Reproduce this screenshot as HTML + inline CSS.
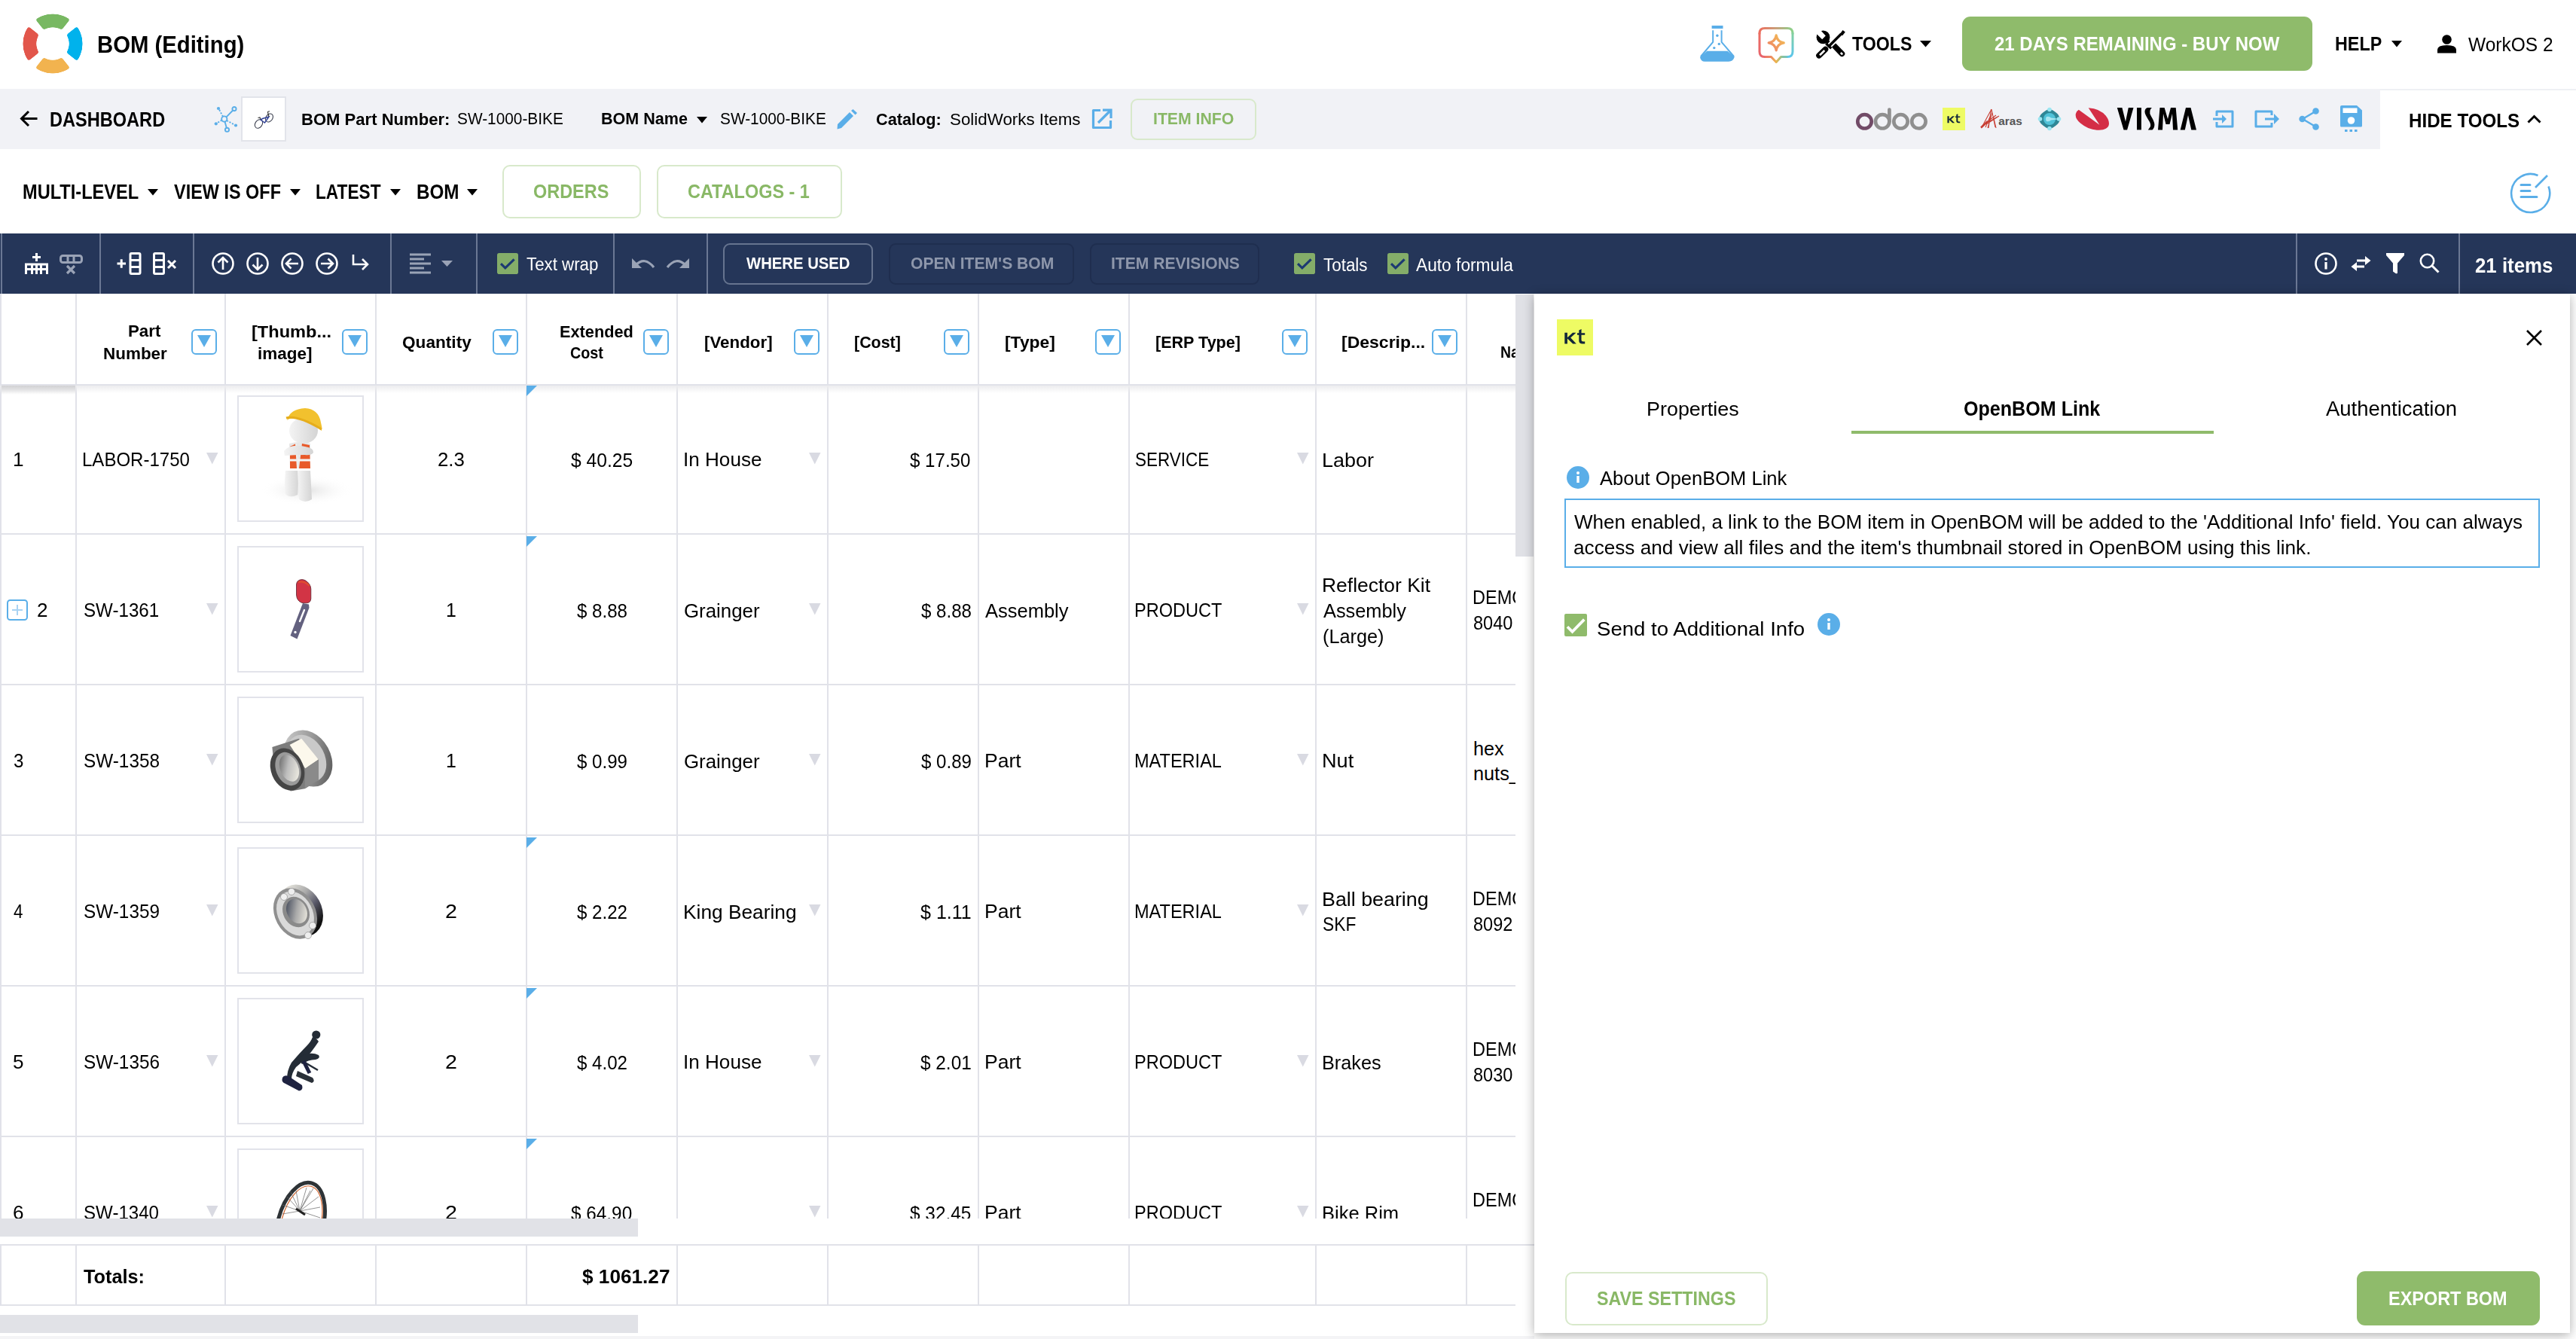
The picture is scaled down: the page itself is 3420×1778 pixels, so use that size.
<!DOCTYPE html>
<html><head><meta charset="utf-8"><title>BOM (Editing)</title>
<style>
html,body{margin:0;padding:0;}
body{width:3420px;height:1778px;position:relative;overflow:hidden;background:#fff;font-family:"Liberation Sans",sans-serif;}
.t{position:absolute;white-space:nowrap;transform-origin:0 0;}
svg{overflow:visible}
</style></head><body>
<svg style="position:absolute;left:30px;top:18px;" width="80" height="80" viewBox="0 0 80 80"><defs><filter id="rnd" x="-10%" y="-10%" width="120%" height="120%"><feGaussianBlur stdDeviation="1.6"/><feComponentTransfer><feFuncA type="linear" slope="6" intercept="-2.5"/></feComponentTransfer></filter><mask id="lm"><rect width="80" height="80" fill="#fff"/><path d="M50.32 55.13 L66.59 75.64 L75.64 66.59 L55.13 50.32Z" fill="#000" stroke="#000" stroke-width="1.5" stroke-linejoin="round"/><path d="M24.87 50.32 L4.36 66.59 L13.41 75.64 L29.68 55.13Z" fill="#000" stroke="#000" stroke-width="1.5" stroke-linejoin="round"/><path d="M29.68 24.87 L13.41 4.36 L4.36 13.41 L24.87 29.68Z" fill="#000" stroke="#000" stroke-width="1.5" stroke-linejoin="round"/><path d="M55.13 29.68 L75.64 13.41 L66.59 4.36 L50.32 24.87Z" fill="#000" stroke="#000" stroke-width="1.5" stroke-linejoin="round"/><circle cx="40" cy="40" r="21.8" fill="#000"/></mask></defs><g filter="url(#rnd)"><g mask="url(#lm)"><clipPath id="lc"><circle cx="40" cy="40" r="39.6"/></clipPath><g clip-path="url(#lc)"><path d="M40 40 L-2.43 -2.43 L82.43 -2.43Z" fill="#78b862"/><path d="M40 40 L82.43 -2.43 L82.43 82.43Z" fill="#00b2ec"/><path d="M40 40 L82.43 82.43 L-2.43 82.43Z" fill="#f2b34f"/><path d="M40 40 L-2.43 82.43 L-2.43 -2.43Z" fill="#e2574b"/></g></g></g></svg>
<svg style="position:absolute;left:2250px;top:28px;" width="140" height="62" viewBox="0 0 140 62"><rect x="22.6" y="6" width="14.9" height="4" fill="#5aaee8"/>
<path d="M24.2 12.2 V27.8 L8 47 M35.6 12.2 V27.8 L52 47" stroke="#5aaee8" stroke-width="2" fill="none" stroke-linejoin="round"/>
<path d="M16.3 39.7 H43.5 L52.8 47.6 Q51 53.8 45 53.8 H13.6 Q7.8 53.8 7 47.8Z" fill="#5aaee8"/>
<circle cx="29.9" cy="19.3" r="1.7" fill="#5aaee8"/><circle cx="32.3" cy="30.4" r="1.7" fill="#5aaee8"/><circle cx="25.8" cy="35.6" r="1.7" fill="#5aaee8"/>
<defs>
<linearGradient id="gT" gradientUnits="userSpaceOnUse" x1="86" y1="0" x2="130" y2="0"><stop offset="0" stop-color="#ec6e5e"/><stop offset="0.5" stop-color="#c9a07a"/><stop offset="1" stop-color="#8cd28c"/></linearGradient>
<linearGradient id="gR" gradientUnits="userSpaceOnUse" x1="0" y1="9" x2="0" y2="48"><stop offset="0" stop-color="#8cd28c"/><stop offset="1" stop-color="#5bc6ee"/></linearGradient>
<linearGradient id="gL" gradientUnits="userSpaceOnUse" x1="0" y1="9" x2="0" y2="48"><stop offset="0" stop-color="#ec6e5e"/><stop offset="1" stop-color="#e8656e"/></linearGradient>
<linearGradient id="gB" gradientUnits="userSpaceOnUse" x1="86" y1="0" x2="130" y2="0"><stop offset="0" stop-color="#e8656e"/><stop offset="0.35" stop-color="#ee8a62"/><stop offset="0.5" stop-color="#eeb54c"/><stop offset="0.7" stop-color="#86c2a0"/><stop offset="1" stop-color="#5bc6ee"/></linearGradient>
<linearGradient id="gS" gradientUnits="userSpaceOnUse" x1="98" y1="38" x2="118" y2="19"><stop offset="0" stop-color="#ee8068"/><stop offset="1" stop-color="#f3c052"/></linearGradient>
</defs>
<g fill="none" stroke-width="3" stroke-linejoin="round" stroke-linecap="round">
<path d="M86 16.5 Q86 9.6 93 9.6 H123 Q130 9.6 130 16.5" stroke="url(#gT)"/>
<path d="M130 16 V40.5 Q130 47.5 123 47.5 H121" stroke="url(#gR)"/>
<path d="M86 16 V40.5 Q86 47.5 93 47.5 H95" stroke="url(#gL)"/>
<path d="M94 47.5 H101.5 L108.2 54.5 L114.5 47.5 H122" stroke="url(#gB)"/>
<path d="M108.2 19 Q109.6 27.4 118.2 28.9 Q109.6 30.4 108.2 38.8 Q106.8 30.4 98.2 28.9 Q106.8 27.4 108.2 19Z" stroke="url(#gS)" stroke-width="3.3"/>
</g></svg>
<svg style="position:absolute;left:2405px;top:35px;" width="50" height="45" viewBox="0 0 50 45"><circle cx="15.5" cy="14.4" r="8.9" fill="#000"/><path d="M1.5 5 L14.2 17.2 L18.8 12.6 L7 -0.5 Z" fill="#fff"/><path d="M18 17 L24 23" stroke="#000" stroke-width="5"/><path d="M30.5 26 L40.5 36.3" stroke="#000" stroke-width="7.5" stroke-linecap="round"/><path d="M38.8 35 L41.2 37.4" stroke="#fff" stroke-width="2.6"/><path d="M39.5 10 L22 27.5" stroke="#fff" stroke-width="7"/><path d="M39.5 10 L22 27.5" stroke="#000" stroke-width="3.4"/><path d="M41.5 5 L44.8 7.5 L41.2 12.2 L37.5 10.5Z" fill="#000"/><path d="M19.2 22.8 L26.3 29.3" stroke="#000" stroke-width="3.2"/><path d="M18.5 30.5 L10 38.8" stroke="#000" stroke-width="7.6" stroke-linecap="round"/><path d="M17.3 32 L11 38.2" stroke="#fff" stroke-width="2.6"/></svg>
<svg style="position:absolute;left:2549px;top:54px;" width="16" height="9" viewBox="0 0 16 9"><path d="M0 0 H15 L7.5 8.6Z" fill="#000"/></svg>
<div style="position:absolute;left:2605px;top:22px;width:465px;height:72px;background:#8fbb6b;border-radius:11px;"></div>
<svg style="position:absolute;left:3175px;top:54px;" width="15" height="9" viewBox="0 0 15 9"><path d="M0 0 H14 L7 8.6Z" fill="#000"/></svg>
<svg style="position:absolute;left:3236px;top:46px;" width="25" height="25" viewBox="0 0 25 25"><circle cx="12.5" cy="6.5" r="6.3" fill="#000"/><path d="M0 24.5 V20 Q0 14 12.5 14 Q25 14 25 20 V24.5Z" fill="#000"/></svg>
<div style="position:absolute;left:0px;top:118px;width:3160px;height:80px;background:#f1f2f6;"></div>
<div style="position:absolute;left:3160px;top:118px;width:260px;height:2px;background:#eef0f4;"></div>
<svg style="position:absolute;left:26px;top:145px;" width="25" height="25" viewBox="0 0 25 25"><path d="M23.5 12.5 H3 M12 3 L2.5 12.5 L12 22" stroke="#000" stroke-width="3" fill="none"/></svg>
<svg style="position:absolute;left:284px;top:141px;" width="32" height="35" viewBox="0 0 32 35"><g stroke="#5aaee8" stroke-width="1.9" fill="none">
<circle cx="13.8" cy="17" r="3.6"/><circle cx="27" cy="3.6" r="2.6"/><circle cx="17.5" cy="31.3" r="2.6"/>
<path d="M16.5 14.3 L25.2 5.5 M14.5 20.6 L16.8 28.7" /><path d="M12 13.8 L7 4.5 M17 19 L27.5 24.8 M10.5 18.5 L4 22.5" stroke-dasharray="2.2 1.8"/></g>
<circle cx="6" cy="3" r="2.1" fill="#5aaee8"/><circle cx="2.8" cy="23.3" r="2.1" fill="#5aaee8"/><circle cx="29" cy="25.5" r="2.1" fill="#5aaee8"/></svg>
<div style="position:absolute;left:320px;top:128px;width:60px;height:60px;background:#fff;border:2px solid #e2e4ea;box-sizing:border-box;"></div>
<svg style="position:absolute;left:320px;top:128px;" width="60" height="60" viewBox="0 0 60 60"><g fill="none" stroke-width="1.1"><ellipse cx="23.5" cy="36.5" rx="4.6" ry="6.2" transform="rotate(35 23.5 36.5)" stroke="#3b3f4f"/><ellipse cx="37.5" cy="28.5" rx="4.4" ry="6" transform="rotate(35 37.5 28.5)" stroke="#3b3f4f"/>
<path d="M26 31 L31.5 35 L37 27 L28.5 29.5 Z" stroke="#33449a" stroke-width="1.5"/><path d="M35.5 21 L37 27 M35 20.5 L38 19.8 M26 30.5 L25 28 L22.5 28.5" stroke="#333"/></g></svg>
<svg style="position:absolute;left:925px;top:155px;" width="15" height="9" viewBox="0 0 15 9"><path d="M0 0 H14 L7 8.6Z" fill="#000"/></svg>
<svg style="position:absolute;left:1110px;top:145px;" width="28" height="27" viewBox="0 0 28 27"><path d="M2 20 L18 4 L23 9 L7 25 L1.5 26.5Z" fill="#5aaee8"/><path d="M20 2 L22.5 0 L28 5 L25.5 7.5Z" fill="#5aaee8"/></svg>
<svg style="position:absolute;left:1449px;top:144px;" width="28" height="28" viewBox="0 0 28 28"><path d="M12 2.5 H2.5 V25.5 H25.5 V16" stroke="#5aaee8" stroke-width="3.2" fill="none" stroke-linejoin="round"/><path d="M9 19 L25 3 M15 2.2 H26 V13" stroke="#5aaee8" stroke-width="3.2" fill="none"/></svg>
<div style="position:absolute;left:1501px;top:130.5px;width:167px;height:55px;border:2px solid #d8e9cb;border-radius:9px;box-sizing:border-box;"></div>
<svg style="position:absolute;left:2450px;top:135px;" width="170" height="45" viewBox="0 0 170 45"><circle cx="25.5" cy="26.3" r="9.2" stroke="#714b67" stroke-width="4.7" fill="none"/><g stroke="#8f8f8f" stroke-width="4.7" fill="none"><circle cx="49.2" cy="26.3" r="9.2"/><path d="M58.4 26.3 V10.5" stroke-linecap="round"/><circle cx="73.5" cy="26.3" r="9.2"/><circle cx="97.4" cy="26.3" r="9.2"/></g></svg>
<div style="position:absolute;left:2579px;top:143px;width:30px;height:30px;background:#eefb64;"></div>
<svg style="position:absolute;left:2579px;top:143px;" width="30" height="30" viewBox="0 0 30 30"><path transform="scale(0.625)" d="M10.3 17.8 H13.9 V24.2 L21 17.8 H25.5 L18.2 24.6 L25.8 32.4 H21.2 L13.9 25.5 V32.4 H10.3 Z M29.3 14.5 L32.6 13.1 L32.5 18.3 H37.2 V20.8 H32.5 V27.5 Q32.5 29.6 35 29.6 H37.2 V32.4 H34 Q29.3 32.4 29.3 28.5 V20.8 H27 V18.3 H29.3 Z" fill="#12263a"/></svg>
<svg style="position:absolute;left:2620px;top:135px;" width="80" height="45" viewBox="0 0 80 45"><g stroke="#c42b1f" stroke-width="1.1" fill="none" opacity="0.9"><path d="M10.5 35 L24 10 M24 10 L29 34 M23.5 10 L20 35 M25 14 L19 35 M17 30 L34 19 M20 27 L32 20 M22 24 L30 18 M16 34 L22 20 M26.5 20 L30 35 M11 34 L21 25"/><path d="M10 34.5 L19 26" stroke-width="2.5"/></g><text x="33.3" y="31" font-family="Liberation Sans" font-weight="bold" font-size="15.5" fill="#555" textLength="31.5" lengthAdjust="spacingAndGlyphs">aras</text></svg>
<svg style="position:absolute;left:2705px;top:142px;" width="32" height="32" viewBox="0 0 32 32"><path d="M16 2.5 Q21 4 27 9.5 Q30 14 29.5 16 Q30 19 27 22.5 Q21 28 16 29.5 Q11 28 5 22.5 Q2 19 2.5 16 Q2 13 5 9.5 Q11 4 16 2.5Z" fill="#2f8796"/><circle cx="16" cy="16" r="8" fill="#50c2d8"/><path d="M12 13 Q16 12 18 14.5 L29 16 L18 17.5 Q16 20 12 19 Q10 16 12 13Z" fill="#a9e6f0"/><circle cx="16" cy="3.5" r="2.8" fill="#9be6f2"/><circle cx="16" cy="28.5" r="2.8" fill="#9be6f2"/><circle cx="3.5" cy="16" r="2.8" fill="#9be6f2"/><circle cx="28.5" cy="16" r="2.8" fill="#9be6f2"/></svg>
<svg style="position:absolute;left:2750px;top:135px;" width="170" height="45" viewBox="0 0 170 45"><path d="M9.8 10.8 L37.4 30.7 L22.7 8.2 Q38 9 46 19 Q52 27 49 33 Q45 38.5 34 37.7 Q22 37 12 28.5 Q4.5 22 5.9 16 Q6.8 12.5 9.8 10.8Z" fill="#d42e46"/><g fill="#000"><path d="M60.8 8 L67.4 8 L72 26.6 L75.8 8 L82.5 8 L74.1 37.4 L69.5 37.4Z"/><path d="M87 8 H92.9 V37.4 H87Z"/><path d="M106.9 8 L101 8 Q96.5 9.5 97.8 15.5 Q99 19 104 27 Q106.5 32 104 34.5 L101.8 37.4 L107.5 37.4 Q110.6 35 110.4 30 Q110 26 106 19.5 Q103.5 15.5 104.4 12 Q105 9.5 106.9 8Z"/><path d="M115 37.4 L117.5 8 L123.6 8 L128 23 L132 8 L138.7 8 L141.2 37.4 L135 37.4 L134 16 L130.5 30 L125.5 30 L122 16 L121 37.4Z"/><path d="M144.7 37.4 L152 8 L158.5 8 L166 37.4 L159.3 37.4 L155 18 L150.8 37.4Z"/></g></svg>
<svg style="position:absolute;left:2938px;top:146px;" width="28" height="24" viewBox="0 0 28 24"><path d="M5 8 V2 H26 V22 H5 V16" stroke="#5aaee8" stroke-width="3" fill="none" stroke-linejoin="round"/><path d="M0 12 H15" stroke="#5aaee8" stroke-width="3"/><path d="M12 6 L18 12 L12 18Z" fill="#5aaee8"/></svg>
<svg style="position:absolute;left:2993px;top:146px;" width="34" height="24" viewBox="0 0 34 24"><path d="M23 7 V2 H2 V22 H23 V17" stroke="#5aaee8" stroke-width="3" fill="none" stroke-linejoin="round"/><path d="M14 12 H28" stroke="#5aaee8" stroke-width="3"/><path d="M26 5 L33 12 L26 19Z" fill="#5aaee8"/></svg>
<svg style="position:absolute;left:3052px;top:143px;" width="28" height="30" viewBox="0 0 28 30"><g stroke="#5aaee8" stroke-width="2.6"><path d="M5 15 L22 5 M5 15 L22 25"/></g><circle cx="22.5" cy="4.5" r="4.3" fill="#5aaee8"/><circle cx="4.6" cy="15" r="4.3" fill="#5aaee8"/><circle cx="22.5" cy="25.5" r="4.3" fill="#5aaee8"/></svg>
<svg style="position:absolute;left:3107px;top:140px;" width="30" height="37" viewBox="0 0 30 37"><path d="M2 0 H22 L29 6.5 V27 Q29 28.5 27.5 28.5 H1.5 Q0 28.5 0 27 V1.5 Q0 0 2 0Z" fill="#5aaee8"/>
<rect x="3.5" y="3.5" width="19" height="6.5" fill="#fff"/><circle cx="14.5" cy="20" r="4.8" fill="#fff"/>
<rect x="6" y="32" width="3.5" height="3" fill="#5aaee8"/><rect x="12.5" y="32" width="3.5" height="3" fill="#5aaee8"/><rect x="19" y="32" width="3.5" height="3" fill="#5aaee8"/></svg>
<svg style="position:absolute;left:3355px;top:153px;" width="19" height="11" viewBox="0 0 19 11"><path d="M1.5 9.5 L9.5 1.5 L17.5 9.5" stroke="#000" stroke-width="3" fill="none"/></svg>
<svg style="position:absolute;left:196px;top:251px;" width="15" height="9" viewBox="0 0 15 9"><path d="M0 0 H14 L7 8.6Z" fill="#000"/></svg>
<svg style="position:absolute;left:384.6px;top:251px;" width="15" height="9" viewBox="0 0 15 9"><path d="M0 0 H14 L7 8.6Z" fill="#000"/></svg>
<svg style="position:absolute;left:518px;top:251px;" width="15" height="9" viewBox="0 0 15 9"><path d="M0 0 H14 L7 8.6Z" fill="#000"/></svg>
<svg style="position:absolute;left:620px;top:251px;" width="15" height="9" viewBox="0 0 15 9"><path d="M0 0 H14 L7 8.6Z" fill="#000"/></svg>
<div style="position:absolute;left:666.5px;top:218.5px;width:184px;height:71px;border:2px solid #d8e9cb;border-radius:10px;box-sizing:border-box;"></div>
<div style="position:absolute;left:871.5px;top:218.5px;width:246px;height:71px;border:2px solid #d8e9cb;border-radius:10px;box-sizing:border-box;"></div>
<svg style="position:absolute;left:3331px;top:227px;" width="54" height="54" viewBox="0 0 54 54"><path d="M38.5 6 A25.5 25.5 0 1 0 52.5 20.5" stroke="#5aaee8" stroke-width="2.6" fill="none"/>
<path d="M35 22 L51 6" stroke="#5aaee8" stroke-width="2.6"/>
<g stroke="#5aaee8" stroke-width="3" stroke-linecap="round"><path d="M16 18.5 H28 M16 26.5 H28 M16 34.5 H37"/></g></svg>
<div style="position:absolute;left:0px;top:310px;width:3420px;height:80px;background:#253659;"></div>
<div style="position:absolute;left:1px;top:310px;width:2px;height:80px;background:#6b7894;"></div>
<div style="position:absolute;left:131.5px;top:310px;width:2px;height:80px;background:#6b7894;"></div>
<div style="position:absolute;left:256px;top:310px;width:2px;height:80px;background:#6b7894;"></div>
<div style="position:absolute;left:518px;top:310px;width:2px;height:80px;background:#6b7894;"></div>
<div style="position:absolute;left:631.5px;top:310px;width:2px;height:80px;background:#6b7894;"></div>
<div style="position:absolute;left:814px;top:310px;width:2px;height:80px;background:#6b7894;"></div>
<div style="position:absolute;left:937.5px;top:310px;width:2px;height:80px;background:#6b7894;"></div>
<div style="position:absolute;left:3048px;top:310px;width:2px;height:80px;background:#6b7894;"></div>
<div style="position:absolute;left:3264px;top:310px;width:2px;height:80px;background:#6b7894;"></div>
<svg style="position:absolute;left:33px;top:335px;" width="31" height="30" viewBox="0 0 31 30"><path d="M15.5 1 V12 M10 6.5 H21" stroke="#fff" stroke-width="3"/><path d="M1.5 29 V16 H29.5 V29 M1.5 22.5 H29.5 M9.5 16 V29 M15.5 16 V29 M21.5 16 V29" stroke="#fff" stroke-width="3" fill="none"/></svg>
<svg style="position:absolute;left:79px;top:338px;" width="31" height="26" viewBox="0 0 31 26"><rect x="1.5" y="1.5" width="28" height="9" rx="3" stroke="#9aa3b6" stroke-width="3" fill="none"/><path d="M11 1.5 V10.5 M19 1.5 V10.5" stroke="#9aa3b6" stroke-width="3"/><path d="M10 15 L20 25 M20 15 L10 25" stroke="#9aa3b6" stroke-width="3.2"/></svg>
<svg style="position:absolute;left:155px;top:335px;" width="33" height="30" viewBox="0 0 33 30"><path d="M0.5 15 H12 M6.2 9.2 V20.8" stroke="#fff" stroke-width="3"/><rect x="18" y="1.5" width="13" height="27" rx="1.5" stroke="#fff" stroke-width="3" fill="none"/><path d="M18 10.5 H31 M18 19.5 H31" stroke="#fff" stroke-width="3"/></svg>
<svg style="position:absolute;left:203px;top:335px;" width="32" height="30" viewBox="0 0 32 30"><rect x="1.5" y="1.5" width="13" height="27" rx="1.5" stroke="#fff" stroke-width="3" fill="none"/><path d="M1.5 10.5 H14.5 M1.5 19.5 H14.5" stroke="#fff" stroke-width="3"/><path d="M20 11 L30 21 M30 11 L20 21" stroke="#fff" stroke-width="3"/></svg>
<svg style="position:absolute;left:281px;top:335px;" width="30" height="30" viewBox="0 0 30 30"><circle cx="15" cy="15" r="13.5" stroke="#fff" stroke-width="2.6" fill="none"/><g transform="rotate(0 15 15)"><path d="M15 23 V7.5 M8.5 13.5 L15 7 L21.5 13.5" stroke="#fff" stroke-width="2.6" fill="none"/></g></svg>
<svg style="position:absolute;left:327px;top:335px;" width="30" height="30" viewBox="0 0 30 30"><circle cx="15" cy="15" r="13.5" stroke="#fff" stroke-width="2.6" fill="none"/><g transform="rotate(180 15 15)"><path d="M15 23 V7.5 M8.5 13.5 L15 7 L21.5 13.5" stroke="#fff" stroke-width="2.6" fill="none"/></g></svg>
<svg style="position:absolute;left:373px;top:335px;" width="30" height="30" viewBox="0 0 30 30"><circle cx="15" cy="15" r="13.5" stroke="#fff" stroke-width="2.6" fill="none"/><g transform="rotate(270 15 15)"><path d="M15 23 V7.5 M8.5 13.5 L15 7 L21.5 13.5" stroke="#fff" stroke-width="2.6" fill="none"/></g></svg>
<svg style="position:absolute;left:419px;top:335px;" width="30" height="30" viewBox="0 0 30 30"><circle cx="15" cy="15" r="13.5" stroke="#fff" stroke-width="2.6" fill="none"/><g transform="rotate(90 15 15)"><path d="M15 23 V7.5 M8.5 13.5 L15 7 L21.5 13.5" stroke="#fff" stroke-width="2.6" fill="none"/></g></svg>
<svg style="position:absolute;left:467px;top:338px;" width="24" height="26" viewBox="0 0 24 26"><path d="M2 0 V13 H20" stroke="#fff" stroke-width="2.6" fill="none"/><path d="M14 6 L21 13 L14 20" stroke="#fff" stroke-width="2.6" fill="none"/></svg>
<svg style="position:absolute;left:544px;top:336px;" width="28" height="29" viewBox="0 0 28 29"><g stroke="#9aa3b6" stroke-width="3"><path d="M0 2 H28 M0 8 H19 M0 14 H28 M0 20 H19 M0 26 H28"/></g></svg>
<svg style="position:absolute;left:586px;top:346px;" width="15" height="8" viewBox="0 0 15 8"><path d="M0 0 H15 L7.5 8Z" fill="#9aa3b6"/></svg>
<svg style="position:absolute;left:660px;top:336px;" width="28" height="28" viewBox="0 0 28 28"><rect width="28" height="28" rx="2.8" fill="#84ad69"/><path d="M5 14.2 L10.8 19.8 L22.6 8.3" stroke="#1c3972" stroke-width="3.1" fill="none"/></svg>
<svg style="position:absolute;left:838px;top:342px;" width="32" height="15" viewBox="0 0 32 15"><path d="M1 1 V14 H14Z" fill="#9aa3b6"/><path d="M6 10 Q18 -2 30 13" stroke="#9aa3b6" stroke-width="3.2" fill="none"/></svg>
<svg style="position:absolute;left:884px;top:342px;" width="32" height="15" viewBox="0 0 32 15"><path d="M31 1 V14 H18Z" fill="#9aa3b6"/><path d="M26 10 Q14 -2 2 13" stroke="#9aa3b6" stroke-width="3.2" fill="none"/></svg>
<div style="position:absolute;left:960px;top:322.5px;width:198.5px;height:55px;border:2px solid #66748f;border-radius:9px;box-sizing:border-box;"></div>
<div style="position:absolute;left:1180px;top:322.5px;width:245.5px;height:55px;border:2px solid #1f2e4f;border-radius:9px;box-sizing:border-box;"></div>
<div style="position:absolute;left:1446.5px;top:322.5px;width:225px;height:55px;border:2px solid #1f2e4f;border-radius:9px;box-sizing:border-box;"></div>
<svg style="position:absolute;left:1718px;top:336px;" width="28" height="28" viewBox="0 0 28 28"><rect width="28" height="28" rx="2.8" fill="#84ad69"/><path d="M5 14.2 L10.8 19.8 L22.6 8.3" stroke="#1c3972" stroke-width="3.1" fill="none"/></svg>
<svg style="position:absolute;left:1842px;top:336px;" width="28" height="28" viewBox="0 0 28 28"><rect width="28" height="28" rx="2.8" fill="#84ad69"/><path d="M5 14.2 L10.8 19.8 L22.6 8.3" stroke="#1c3972" stroke-width="3.1" fill="none"/></svg>
<svg style="position:absolute;left:3073px;top:335px;" width="30" height="30" viewBox="0 0 30 30"><circle cx="15" cy="15" r="13.5" stroke="#fff" stroke-width="2.6" fill="none"/><circle cx="15" cy="9" r="1.9" fill="#fff"/><path d="M15 13 V22.5" stroke="#fff" stroke-width="3.2"/></svg>
<svg style="position:absolute;left:3121px;top:339px;" width="27" height="22" viewBox="0 0 27 22"><path d="M8 7 H21 M5 15 H18" stroke="#fff" stroke-width="3"/><path d="M19 1 L26.5 7 L19 13Z M8 9 L0.5 15 L8 21Z" fill="#fff"/></svg>
<svg style="position:absolute;left:3168px;top:336px;" width="24" height="28" viewBox="0 0 24 28"><path d="M0 0 H24 V3 L15 13.5 V26 Q15 28 12.5 27 L9 24.5 V13.5 L0 3Z" fill="#fff"/></svg>
<svg style="position:absolute;left:3212px;top:336px;" width="27" height="27" viewBox="0 0 27 27"><circle cx="10.5" cy="10.5" r="8.7" stroke="#fff" stroke-width="2.6" fill="none"/><path d="M17 17 L25.5 25.5" stroke="#fff" stroke-width="3"/></svg>
<span class="t" style="left:129.15px;top:44.17px;font-size:31.687px;line-height:31.687px;font-weight:bold;color:#000;transform:scaleX(0.9251);">BOM (Editing)</span>
<span class="t" style="left:2459.00px;top:44.85px;font-size:26.163px;line-height:26.163px;font-weight:bold;color:#000;transform:scaleX(0.8859);">TOOLS</span>
<span class="t" style="left:2647.50px;top:44.85px;font-size:26.163px;line-height:26.163px;font-weight:bold;color:#fff;transform:scaleX(0.9165);">21 DAYS REMAINING - BUY NOW</span>
<span class="t" style="left:3100.16px;top:44.85px;font-size:26.163px;line-height:26.163px;font-weight:bold;color:#000;transform:scaleX(0.8915);">HELP</span>
<span class="t" style="left:3277.00px;top:45.85px;font-size:26.163px;line-height:26.163px;font-weight:normal;color:#000;transform:scaleX(0.9364);">WorkOS 2</span>
<span class="t" style="left:65.62px;top:145.76px;font-size:26.745px;line-height:26.745px;font-weight:bold;color:#000;transform:scaleX(0.8813);font-weight:bold;-webkit-text-stroke:0;">DASHBOARD</span>
<span class="t" style="left:399.51px;top:148.45px;font-size:22.384px;line-height:22.384px;font-weight:bold;color:#000;transform:scaleX(0.9863);">BOM Part Number:</span>
<span class="t" style="left:607.07px;top:147.45px;font-size:22.384px;line-height:22.384px;font-weight:normal;color:#000;transform:scaleX(0.9305);">SW-1000-BIKE</span>
<span class="t" style="left:798.29px;top:147.45px;font-size:22.384px;line-height:22.384px;font-weight:bold;color:#000;transform:scaleX(0.9626);">BOM Name</span>
<span class="t" style="left:956.07px;top:147.45px;font-size:22.384px;line-height:22.384px;font-weight:normal;color:#000;transform:scaleX(0.9305);">SW-1000-BIKE</span>
<span class="t" style="left:1162.90px;top:148.45px;font-size:22.384px;line-height:22.384px;font-weight:bold;color:#000;transform:scaleX(0.9699);">Catalog:</span>
<span class="t" style="left:1260.55px;top:148.45px;font-size:22.384px;line-height:22.384px;font-weight:normal;color:#000;transform:scaleX(0.9990);">SolidWorks Items</span>
<span class="t" style="left:1531.05px;top:147.45px;font-size:22.384px;line-height:22.384px;font-weight:bold;color:#89b866;transform:scaleX(0.9489);">ITEM INFO</span>
<span class="t" style="left:3197.78px;top:147.83px;font-size:25.000px;line-height:25.000px;font-weight:bold;color:#000;transform:scaleX(0.9658);">HIDE TOOLS</span>
<span class="t" style="left:29.62px;top:241.76px;font-size:26.745px;line-height:26.745px;font-weight:bold;color:#000;transform:scaleX(0.8823);">MULTI-LEVEL</span>
<span class="t" style="left:231.00px;top:241.76px;font-size:26.745px;line-height:26.745px;font-weight:bold;color:#000;transform:scaleX(0.8771);">VIEW IS OFF</span>
<span class="t" style="left:419.05px;top:241.76px;font-size:26.745px;line-height:26.745px;font-weight:bold;color:#000;transform:scaleX(0.8480);">LATEST</span>
<span class="t" style="left:552.84px;top:241.76px;font-size:26.745px;line-height:26.745px;font-weight:bold;color:#000;transform:scaleX(0.9068);">BOM</span>
<span class="t" style="left:708.10px;top:241.35px;font-size:26.163px;line-height:26.163px;font-weight:bold;color:#89b866;transform:scaleX(0.8963);">ORDERS</span>
<span class="t" style="left:913.10px;top:241.35px;font-size:26.163px;line-height:26.163px;font-weight:bold;color:#89b866;transform:scaleX(0.8960);">CATALOGS - 1</span>
<span class="t" style="left:698.50px;top:338.87px;font-size:24.128px;line-height:24.128px;font-weight:normal;color:#fff;transform:scaleX(0.9245);">Text wrap</span>
<span class="t" style="left:991.00px;top:338.36px;font-size:22.966px;line-height:22.966px;font-weight:bold;color:#fff;transform:scaleX(0.8838);">WHERE USED</span>
<span class="t" style="left:1209.05px;top:338.36px;font-size:22.966px;line-height:22.966px;font-weight:bold;color:#8e97ab;transform:scaleX(0.9197);">OPEN ITEM'S BOM</span>
<span class="t" style="left:1475.08px;top:338.36px;font-size:22.966px;line-height:22.966px;font-weight:bold;color:#8e97ab;transform:scaleX(0.9178);">ITEM REVISIONS</span>
<span class="t" style="left:1756.50px;top:339.87px;font-size:24.128px;line-height:24.128px;font-weight:normal;color:#fff;transform:scaleX(0.9297);">Totals</span>
<span class="t" style="left:1880.40px;top:339.87px;font-size:24.128px;line-height:24.128px;font-weight:normal;color:#fff;transform:scaleX(0.9426);">Auto formula</span>
<span class="t" style="left:3285.90px;top:339.51px;font-size:27.035px;line-height:27.035px;font-weight:bold;color:#fff;transform:scaleX(0.9561);">21 items</span>
<div style="position:absolute;left:0px;top:390px;width:2px;height:1228px;background:#e1e2e9;"></div>
<div style="position:absolute;left:99.5px;top:390px;width:2px;height:1228px;background:#e1e2e9;"></div>
<div style="position:absolute;left:298px;top:390px;width:2px;height:1228px;background:#e1e2e9;"></div>
<div style="position:absolute;left:498px;top:390px;width:2px;height:1228px;background:#e1e2e9;"></div>
<div style="position:absolute;left:698px;top:390px;width:2px;height:1228px;background:#e1e2e9;"></div>
<div style="position:absolute;left:898px;top:390px;width:2px;height:1228px;background:#e1e2e9;"></div>
<div style="position:absolute;left:1098px;top:390px;width:2px;height:1228px;background:#e1e2e9;"></div>
<div style="position:absolute;left:1298px;top:390px;width:2px;height:1228px;background:#e1e2e9;"></div>
<div style="position:absolute;left:1498px;top:390px;width:2px;height:1228px;background:#e1e2e9;"></div>
<div style="position:absolute;left:1746px;top:390px;width:2px;height:1228px;background:#e1e2e9;"></div>
<div style="position:absolute;left:1946px;top:390px;width:2px;height:1228px;background:#e1e2e9;"></div>
<div style="position:absolute;left:0px;top:510px;width:2012px;height:2px;background:#e1e2e9;"></div>
<div style="position:absolute;left:0px;top:512px;width:2012px;height:10px;background:linear-gradient(#ececee,rgba(255,255,255,0));"></div>
<div style="position:absolute;left:2px;top:512px;width:98px;height:12px;background:linear-gradient(#d2d2d4,rgba(255,255,255,0));"></div>
<div style="position:absolute;left:0px;top:708px;width:2012px;height:2px;background:#e1e2e9;"></div>
<div style="position:absolute;left:0px;top:908px;width:2012px;height:2px;background:#e1e2e9;"></div>
<div style="position:absolute;left:0px;top:1108px;width:2012px;height:2px;background:#e1e2e9;"></div>
<div style="position:absolute;left:0px;top:1308px;width:2012px;height:2px;background:#e1e2e9;"></div>
<div style="position:absolute;left:0px;top:1508px;width:2012px;height:2px;background:#e1e2e9;"></div>
<svg style="position:absolute;left:253.7px;top:436.5px;" width="34" height="34" viewBox="0 0 34 34"><rect x="1" y="1" width="32" height="32" rx="5" stroke="#5aaee8" stroke-width="2" fill="#fff"/><path d="M8 8 H26 L17 24Z" fill="#5aaee8"/></svg>
<svg style="position:absolute;left:453.7px;top:436.5px;" width="34" height="34" viewBox="0 0 34 34"><rect x="1" y="1" width="32" height="32" rx="5" stroke="#5aaee8" stroke-width="2" fill="#fff"/><path d="M8 8 H26 L17 24Z" fill="#5aaee8"/></svg>
<svg style="position:absolute;left:653.7px;top:436.5px;" width="34" height="34" viewBox="0 0 34 34"><rect x="1" y="1" width="32" height="32" rx="5" stroke="#5aaee8" stroke-width="2" fill="#fff"/><path d="M8 8 H26 L17 24Z" fill="#5aaee8"/></svg>
<svg style="position:absolute;left:853.7px;top:436.5px;" width="34" height="34" viewBox="0 0 34 34"><rect x="1" y="1" width="32" height="32" rx="5" stroke="#5aaee8" stroke-width="2" fill="#fff"/><path d="M8 8 H26 L17 24Z" fill="#5aaee8"/></svg>
<svg style="position:absolute;left:1053.7px;top:436.5px;" width="34" height="34" viewBox="0 0 34 34"><rect x="1" y="1" width="32" height="32" rx="5" stroke="#5aaee8" stroke-width="2" fill="#fff"/><path d="M8 8 H26 L17 24Z" fill="#5aaee8"/></svg>
<svg style="position:absolute;left:1253.2px;top:436.5px;" width="34" height="34" viewBox="0 0 34 34"><rect x="1" y="1" width="32" height="32" rx="5" stroke="#5aaee8" stroke-width="2" fill="#fff"/><path d="M8 8 H26 L17 24Z" fill="#5aaee8"/></svg>
<svg style="position:absolute;left:1453.6000000000001px;top:436.5px;" width="34" height="34" viewBox="0 0 34 34"><rect x="1" y="1" width="32" height="32" rx="5" stroke="#5aaee8" stroke-width="2" fill="#fff"/><path d="M8 8 H26 L17 24Z" fill="#5aaee8"/></svg>
<svg style="position:absolute;left:1701.6000000000001px;top:436.5px;" width="34" height="34" viewBox="0 0 34 34"><rect x="1" y="1" width="32" height="32" rx="5" stroke="#5aaee8" stroke-width="2" fill="#fff"/><path d="M8 8 H26 L17 24Z" fill="#5aaee8"/></svg>
<svg style="position:absolute;left:1901.2px;top:436.5px;" width="34" height="34" viewBox="0 0 34 34"><rect x="1" y="1" width="32" height="32" rx="5" stroke="#5aaee8" stroke-width="2" fill="#fff"/><path d="M8 8 H26 L17 24Z" fill="#5aaee8"/></svg>
<svg style="position:absolute;left:274px;top:601px;" width="16" height="16" viewBox="0 0 16 16"><path d="M0 0 H15.5 L7.75 15.5Z" fill="#d9dae2"/></svg>
<div style="position:absolute;left:315px;top:525px;width:168px;height:168px;border:2px solid #e2e3ea;box-sizing:border-box;background:#fff;"></div>
<svg style="position:absolute;left:699px;top:512px;" width="14" height="14" viewBox="0 0 14 14"><path d="M0 0 H14 L0 14Z" fill="#5aaee8"/></svg>
<svg style="position:absolute;left:1074px;top:601px;" width="16" height="16" viewBox="0 0 16 16"><path d="M0 0 H15.5 L7.75 15.5Z" fill="#d9dae2"/></svg>
<svg style="position:absolute;left:1722px;top:601px;" width="16" height="16" viewBox="0 0 16 16"><path d="M0 0 H15.5 L7.75 15.5Z" fill="#d9dae2"/></svg>
<svg style="position:absolute;left:9px;top:796px;" width="28" height="28" viewBox="0 0 28 28"><rect x="1" y="1" width="26" height="26" rx="3.5" stroke="#5aaee8" stroke-width="2" fill="#fff"/><path d="M14 7 V21 M7 14 H21" stroke="#a9d3f3" stroke-width="2"/></svg>
<svg style="position:absolute;left:274px;top:801px;" width="16" height="16" viewBox="0 0 16 16"><path d="M0 0 H15.5 L7.75 15.5Z" fill="#d9dae2"/></svg>
<div style="position:absolute;left:315px;top:725px;width:168px;height:168px;border:2px solid #e2e3ea;box-sizing:border-box;background:#fff;"></div>
<svg style="position:absolute;left:699px;top:712px;" width="14" height="14" viewBox="0 0 14 14"><path d="M0 0 H14 L0 14Z" fill="#5aaee8"/></svg>
<svg style="position:absolute;left:1074px;top:801px;" width="16" height="16" viewBox="0 0 16 16"><path d="M0 0 H15.5 L7.75 15.5Z" fill="#d9dae2"/></svg>
<svg style="position:absolute;left:1722px;top:801px;" width="16" height="16" viewBox="0 0 16 16"><path d="M0 0 H15.5 L7.75 15.5Z" fill="#d9dae2"/></svg>
<svg style="position:absolute;left:274px;top:1001px;" width="16" height="16" viewBox="0 0 16 16"><path d="M0 0 H15.5 L7.75 15.5Z" fill="#d9dae2"/></svg>
<div style="position:absolute;left:315px;top:925px;width:168px;height:168px;border:2px solid #e2e3ea;box-sizing:border-box;background:#fff;"></div>
<svg style="position:absolute;left:1074px;top:1001px;" width="16" height="16" viewBox="0 0 16 16"><path d="M0 0 H15.5 L7.75 15.5Z" fill="#d9dae2"/></svg>
<svg style="position:absolute;left:1722px;top:1001px;" width="16" height="16" viewBox="0 0 16 16"><path d="M0 0 H15.5 L7.75 15.5Z" fill="#d9dae2"/></svg>
<svg style="position:absolute;left:274px;top:1201px;" width="16" height="16" viewBox="0 0 16 16"><path d="M0 0 H15.5 L7.75 15.5Z" fill="#d9dae2"/></svg>
<div style="position:absolute;left:315px;top:1125px;width:168px;height:168px;border:2px solid #e2e3ea;box-sizing:border-box;background:#fff;"></div>
<svg style="position:absolute;left:699px;top:1112px;" width="14" height="14" viewBox="0 0 14 14"><path d="M0 0 H14 L0 14Z" fill="#5aaee8"/></svg>
<svg style="position:absolute;left:1074px;top:1201px;" width="16" height="16" viewBox="0 0 16 16"><path d="M0 0 H15.5 L7.75 15.5Z" fill="#d9dae2"/></svg>
<svg style="position:absolute;left:1722px;top:1201px;" width="16" height="16" viewBox="0 0 16 16"><path d="M0 0 H15.5 L7.75 15.5Z" fill="#d9dae2"/></svg>
<svg style="position:absolute;left:274px;top:1401px;" width="16" height="16" viewBox="0 0 16 16"><path d="M0 0 H15.5 L7.75 15.5Z" fill="#d9dae2"/></svg>
<div style="position:absolute;left:315px;top:1325px;width:168px;height:168px;border:2px solid #e2e3ea;box-sizing:border-box;background:#fff;"></div>
<svg style="position:absolute;left:699px;top:1312px;" width="14" height="14" viewBox="0 0 14 14"><path d="M0 0 H14 L0 14Z" fill="#5aaee8"/></svg>
<svg style="position:absolute;left:1074px;top:1401px;" width="16" height="16" viewBox="0 0 16 16"><path d="M0 0 H15.5 L7.75 15.5Z" fill="#d9dae2"/></svg>
<svg style="position:absolute;left:1722px;top:1401px;" width="16" height="16" viewBox="0 0 16 16"><path d="M0 0 H15.5 L7.75 15.5Z" fill="#d9dae2"/></svg>
<svg style="position:absolute;left:274px;top:1601px;" width="16" height="16" viewBox="0 0 16 16"><path d="M0 0 H15.5 L7.75 15.5Z" fill="#d9dae2"/></svg>
<div style="position:absolute;left:315px;top:1525px;width:168px;height:168px;border:2px solid #e2e3ea;box-sizing:border-box;background:#fff;"></div>
<svg style="position:absolute;left:699px;top:1512px;" width="14" height="14" viewBox="0 0 14 14"><path d="M0 0 H14 L0 14Z" fill="#5aaee8"/></svg>
<svg style="position:absolute;left:1074px;top:1601px;" width="16" height="16" viewBox="0 0 16 16"><path d="M0 0 H15.5 L7.75 15.5Z" fill="#d9dae2"/></svg>
<svg style="position:absolute;left:1722px;top:1601px;" width="16" height="16" viewBox="0 0 16 16"><path d="M0 0 H15.5 L7.75 15.5Z" fill="#d9dae2"/></svg>
<svg style="position:absolute;left:315px;top:525px;" width="168" height="168" viewBox="0 0 168 168"><defs><radialGradient id="sh1" cx="0.5" cy="0.5" r="0.5"><stop offset="0" stop-color="#e2e2e2"/><stop offset="1" stop-color="#fff" stop-opacity="0"/></radialGradient><linearGradient id="bd1" x1="0" y1="0" x2="1" y2="0"><stop offset="0" stop-color="#f4f4f4"/><stop offset="1" stop-color="#d4d4d4"/></linearGradient></defs><ellipse cx="92" cy="126" rx="62" ry="20" fill="url(#sh1)"/><path d="M64 100 Q62 120 64 131 Q70 137 80 132 L82 100Z" fill="url(#bd1)"/><path d="M80 100 L82 138 Q90 144 99 138 L97 100Z" fill="url(#bd1)"/><path d="M69 64 Q83 60 97 64 L97 97 L70 97Z" fill="#e7e7e7"/><path d="M70 68 L78 64 L80 97 L70 97Z M86 64 L96 66 L97 97 L82 97Z" fill="#e85a2a"/><path d="M70 86 H97" stroke="#f4f4f4" stroke-width="3"/><path d="M78 64 L80 97" stroke="#eee" stroke-width="2"/><path d="M62 74 Q70 64 90 68 Q102 70 101 76 Q98 80 90 79 Q75 79 63 80Z" fill="url(#bd1)"/><ellipse cx="88" cy="47" rx="19" ry="17" fill="url(#bd1)"/><path d="M66 33 Q70 18 90 17 Q108 18 111 36 Q113 42 112 47 Q100 38 85 32 Q72 28 66 33Z" fill="#f2c12e"/><path d="M65 30 Q80 26 112 45" stroke="#e6ad1c" stroke-width="3" fill="none"/></svg>
<svg style="position:absolute;left:315px;top:725px;" width="168" height="168" viewBox="0 0 168 168"><path d="M87 76 L95 77.5 L95.5 82 L79.5 123.5 L70.5 119Z" fill="#63617f"/><path d="M89 85 L83 100" stroke="#fff" stroke-width="2.4" stroke-linecap="round"/><circle cx="77" cy="114.5" r="1.7" fill="#fff"/><path d="M80 47 Q84 43 90 45.5 Q97.5 50 97.8 57 L97.8 70 Q97.5 75.5 92 75.8 L86 75.5 Q79 73 78.5 65 L78.5 51 Q78.8 48.5 80 47Z" fill="#d23445" stroke="#5a2230" stroke-width="0.8"/><path d="M81 48 Q89 46 96 53" stroke="#e0502e" stroke-width="2" fill="none"/></svg>
<svg style="position:absolute;left:315px;top:925px;" width="168" height="168" viewBox="0 0 168 168"><defs><linearGradient id="fl" x1="0" y1="0" x2="1" y2="1"><stop offset="0" stop-color="#d8d8d8"/><stop offset="0.5" stop-color="#9a9a9a"/><stop offset="1" stop-color="#4a4a4a"/></linearGradient><linearGradient id="bore" x1="0" y1="0" x2="1" y2="1"><stop offset="0" stop-color="#555"/><stop offset="0.45" stop-color="#bdbdbd"/><stop offset="1" stop-color="#fbf8ec"/></linearGradient></defs><ellipse cx="94" cy="82" rx="30" ry="39.5" transform="rotate(-28 94 82)" fill="url(#fl)"/><ellipse cx="92" cy="82" rx="24" ry="33" transform="rotate(-28 92 82)" fill="#c9c9c9"/><path d="M46.4 67 L81.6 55.8 L107.9 83.4 L107.9 111 L89.7 122.3 L70.9 125.5 L50 105Z" fill="#7c7c7c"/><path d="M69.6 64 L85.3 55.8 L107.9 83.4 L90.3 95.4Z" fill="#fcf8ec"/><path d="M90.3 95.4 L107.9 83.4 L107.9 111 L89.7 122.3Z" fill="#8a8a8a"/><ellipse cx="66.5" cy="96.6" rx="21.6" ry="28.9" transform="rotate(-22 66.5 96.6)" fill="#454545"/><ellipse cx="67.5" cy="96" rx="16" ry="23" transform="rotate(-22 67.5 96)" fill="#9a9a9a"/><ellipse cx="69" cy="95" rx="12" ry="18.5" transform="rotate(-22 69 95)" fill="url(#bore)"/></svg>
<svg style="position:absolute;left:315px;top:1125px;" width="168" height="168" viewBox="0 0 168 168"><defs><linearGradient id="side" x1="0" y1="0" x2="0.3" y2="1"><stop offset="0" stop-color="#fbf9ef"/><stop offset="0.45" stop-color="#a9a9a9"/><stop offset="0.7" stop-color="#5a5a6a"/><stop offset="1" stop-color="#111"/></linearGradient><linearGradient id="bore2" x1="0" y1="0" x2="1" y2="1"><stop offset="0" stop-color="#2c3448"/><stop offset="0.5" stop-color="#aaaaaa"/><stop offset="1" stop-color="#fbf8ec"/></linearGradient></defs><ellipse cx="84" cy="84" rx="28" ry="36" transform="rotate(-28 84 84)" fill="url(#side)"/><ellipse cx="77" cy="88" rx="27" ry="35.5" transform="rotate(-28 77 88)" fill="#8f8f8f"/><ellipse cx="77" cy="88" rx="23" ry="31" transform="rotate(-28 77 88)" fill="#d9d9d9"/><circle cx="62" cy="66" r="4.5" fill="#f0f0f0" stroke="#999" stroke-width="0.8"/><circle cx="72" cy="59" r="4.5" fill="#eee" stroke="#999" stroke-width="0.8"/><circle cx="94" cy="117" r="4.5" fill="#eee" stroke="#999" stroke-width="0.8"/><circle cx="100" cy="104" r="4.5" fill="#eee" stroke="#999" stroke-width="0.8"/><ellipse cx="78" cy="86" rx="17" ry="21" transform="rotate(-28 78 86)" fill="#8a8a8a"/><ellipse cx="79" cy="85" rx="13" ry="17" transform="rotate(-28 79 85)" fill="url(#bore2)"/></svg>
<svg style="position:absolute;left:315px;top:1325px;" width="168" height="168" viewBox="0 0 168 168"><g fill="#242c36"><circle cx="104.8" cy="49" r="5.6"/><path d="M100 52 Q106 54 108 58 Q104 64 98 72 Q88 84 78 92 Q72 100 72 108 L66 108 Q66 96 72 86 Q84 72 92 64 Q98 58 100 52Z"/><path d="M80 80 Q96 70 108 76 Q111 80 104 82 Q94 82 86 88Z"/><path d="M60 106 Q62 102 68 104 L86 116 Q88 123 82 123.5 L64 114 Q58 112 60 106Z" fill="#1e2240"/><path d="M80 97 L100 106 Q104 111 99 113 L78 104Z" fill="#2a3038"/><path d="M90 86 L107 96" stroke="#242c36" stroke-width="2.5"/><path d="M88 84 L96 100" stroke="#1e2240" stroke-width="5"/></g></svg>
<svg style="position:absolute;left:315px;top:1525px;overflow:hidden" width="168" height="93" viewBox="0 0 168 93"><ellipse cx="84" cy="100" rx="30" ry="56" transform="rotate(15 84 100)" stroke="#2e3336" stroke-width="5" fill="none"/><ellipse cx="84.5" cy="100" rx="26" ry="51.5" transform="rotate(15 84.5 100)" stroke="#d0622a" stroke-width="1.2" fill="none" stroke-dasharray="0 60 200"/><g stroke="#666" stroke-width="0.7"><path d="M83 83 L78 56 M83 83 L92 52 M83 83 L101 53 M83 83 L108 64 M83 83 L110 78 M83 83 L66 64 M83 83 L60 75 M83 83 L60 87 M83 83 L110 92 M83 83 L70 56 M83 83 L97 56"/></g><path d="M78 80 L90 88" stroke="#222" stroke-width="3"/></svg>
<span class="t" style="left:170.04px;top:428.89px;font-size:22.093px;line-height:22.093px;font-weight:bold;color:#000;transform:scaleX(1.0095);">Part</span>
<span class="t" style="left:136.88px;top:459.19px;font-size:22.093px;line-height:22.093px;font-weight:bold;color:#000;transform:scaleX(1.0166);">Number</span>
<span class="t" style="left:334.33px;top:429.89px;font-size:22.093px;line-height:22.093px;font-weight:bold;color:#000;transform:scaleX(1.0679);">[Thumb...</span>
<span class="t" style="left:341.78px;top:459.19px;font-size:22.093px;line-height:22.093px;font-weight:bold;color:#000;transform:scaleX(1.0199);">image]</span>
<span class="t" style="left:533.75px;top:444.49px;font-size:22.093px;line-height:22.093px;font-weight:bold;color:#000;transform:scaleX(1.0248);">Quantity</span>
<span class="t" style="left:742.87px;top:430.09px;font-size:22.093px;line-height:22.093px;font-weight:bold;color:#000;transform:scaleX(0.9848);">Extended</span>
<span class="t" style="left:756.50px;top:458.19px;font-size:22.093px;line-height:22.093px;font-weight:bold;color:#000;transform:scaleX(0.8952);">Cost</span>
<span class="t" style="left:934.59px;top:444.49px;font-size:22.093px;line-height:22.093px;font-weight:bold;color:#000;transform:scaleX(1.0115);">[Vendor]</span>
<span class="t" style="left:1134.03px;top:444.49px;font-size:22.093px;line-height:22.093px;font-weight:bold;color:#000;transform:scaleX(0.9693);">[Cost]</span>
<span class="t" style="left:1333.96px;top:444.49px;font-size:22.093px;line-height:22.093px;font-weight:bold;color:#000;transform:scaleX(1.0357);">[Type]</span>
<span class="t" style="left:1534.02px;top:444.49px;font-size:22.093px;line-height:22.093px;font-weight:bold;color:#000;transform:scaleX(0.9758);">[ERP Type]</span>
<span class="t" style="left:1781.36px;top:444.49px;font-size:22.093px;line-height:22.093px;font-weight:bold;color:#000;transform:scaleX(1.0419);">[Descrip...</span>
<span class="t" style="left:1992.12px;top:457.49px;font-size:22.093px;line-height:22.093px;font-weight:bold;color:#000;transform:scaleX(0.8800);">Name</span>
<span class="t" style="left:16.87px;top:597.99px;font-size:25.291px;line-height:25.291px;font-weight:normal;color:#000;transform:scaleX(1.0333);">1</span>
<span class="t" style="left:109.20px;top:597.99px;font-size:25.291px;line-height:25.291px;font-weight:normal;color:#000;transform:scaleX(0.9501);">LABOR-1750</span>
<span class="t" style="left:580.73px;top:597.99px;font-size:25.291px;line-height:25.291px;font-weight:normal;color:#000;transform:scaleX(1.0216);">2.3</span>
<span class="t" style="left:757.80px;top:598.99px;font-size:25.291px;line-height:25.291px;font-weight:normal;color:#000;transform:scaleX(0.9737);">$ 40.25</span>
<span class="t" style="left:906.54px;top:597.99px;font-size:25.291px;line-height:25.291px;font-weight:normal;color:#000;transform:scaleX(1.0323);">In House</span>
<span class="t" style="left:1208.35px;top:598.99px;font-size:25.291px;line-height:25.291px;font-weight:normal;color:#000;transform:scaleX(0.9527);">$ 17.50</span>
<span class="t" style="left:1507.36px;top:597.99px;font-size:25.291px;line-height:25.291px;font-weight:normal;color:#000;transform:scaleX(0.8880);">SERVICE</span>
<span class="t" style="left:1754.87px;top:598.99px;font-size:25.291px;line-height:25.291px;font-weight:normal;color:#000;transform:scaleX(1.0668);">Labor</span>
<span class="t" style="left:48.52px;top:797.99px;font-size:25.291px;line-height:25.291px;font-weight:normal;color:#000;transform:scaleX(1.0333);">2</span>
<span class="t" style="left:110.65px;top:797.99px;font-size:25.291px;line-height:25.291px;font-weight:normal;color:#000;transform:scaleX(0.9546);">SW-1361</span>
<span class="t" style="left:591.52px;top:797.99px;font-size:25.291px;line-height:25.291px;font-weight:normal;color:#000;transform:scaleX(0.9833);">1</span>
<span class="t" style="left:765.50px;top:798.99px;font-size:25.291px;line-height:25.291px;font-weight:normal;color:#000;transform:scaleX(0.9534);">$ 8.88</span>
<span class="t" style="left:907.58px;top:798.99px;font-size:25.291px;line-height:25.291px;font-weight:normal;color:#000;transform:scaleX(1.0223);">Grainger</span>
<span class="t" style="left:1222.95px;top:798.99px;font-size:25.291px;line-height:25.291px;font-weight:normal;color:#000;transform:scaleX(0.9519);">$ 8.88</span>
<span class="t" style="left:1308.25px;top:798.99px;font-size:25.291px;line-height:25.291px;font-weight:normal;color:#000;transform:scaleX(1.0087);">Assembly</span>
<span class="t" style="left:1506.39px;top:797.99px;font-size:25.291px;line-height:25.291px;font-weight:normal;color:#000;transform:scaleX(0.9302);">PRODUCT</span>
<span class="t" style="left:1754.91px;top:764.99px;font-size:25.291px;line-height:25.291px;font-weight:normal;color:#000;transform:scaleX(1.0460);">Reflector Kit</span>
<span class="t" style="left:1757.00px;top:798.99px;font-size:25.291px;line-height:25.291px;font-weight:normal;color:#000;transform:scaleX(1.0024);">Assembly</span>
<span class="t" style="left:1755.50px;top:832.99px;font-size:25.291px;line-height:25.291px;font-weight:normal;color:#000;transform:scaleX(0.9990);">(Large)</span>
<span class="t" style="left:1955.14px;top:780.99px;font-size:25.291px;line-height:25.291px;font-weight:normal;color:#000;transform:scaleX(0.9300);">DEMO-804000</span>
<span class="t" style="left:1956.07px;top:814.99px;font-size:25.291px;line-height:25.291px;font-weight:normal;color:#000;transform:scaleX(0.9300);">8040 </span>
<span class="t" style="left:17.90px;top:997.99px;font-size:25.291px;line-height:25.291px;font-weight:normal;color:#000;transform:scaleX(0.9538);">3</span>
<span class="t" style="left:110.64px;top:997.99px;font-size:25.291px;line-height:25.291px;font-weight:normal;color:#000;transform:scaleX(0.9624);">SW-1358</span>
<span class="t" style="left:591.52px;top:997.99px;font-size:25.291px;line-height:25.291px;font-weight:normal;color:#000;transform:scaleX(0.9833);">1</span>
<span class="t" style="left:765.50px;top:998.99px;font-size:25.291px;line-height:25.291px;font-weight:normal;color:#000;transform:scaleX(0.9534);">$ 0.99</span>
<span class="t" style="left:907.58px;top:998.99px;font-size:25.291px;line-height:25.291px;font-weight:normal;color:#000;transform:scaleX(1.0223);">Grainger</span>
<span class="t" style="left:1222.95px;top:998.99px;font-size:25.291px;line-height:25.291px;font-weight:normal;color:#000;transform:scaleX(0.9519);">$ 0.89</span>
<span class="t" style="left:1306.65px;top:997.99px;font-size:25.291px;line-height:25.291px;font-weight:normal;color:#000;transform:scaleX(1.0487);">Part</span>
<span class="t" style="left:1506.39px;top:997.99px;font-size:25.291px;line-height:25.291px;font-weight:normal;color:#000;transform:scaleX(0.9307);">MATERIAL</span>
<span class="t" style="left:1754.86px;top:997.99px;font-size:25.291px;line-height:25.291px;font-weight:normal;color:#000;transform:scaleX(1.0719);">Nut</span>
<span class="t" style="left:1956.00px;top:981.99px;font-size:25.291px;line-height:25.291px;font-weight:normal;color:#000;transform:scaleX(1.0000);">hex</span>
<span class="t" style="left:1956.00px;top:1014.99px;font-size:25.291px;line-height:25.291px;font-weight:normal;color:#000;transform:scaleX(1.0000);">nuts_m8</span>
<span class="t" style="left:17.90px;top:1197.99px;font-size:25.291px;line-height:25.291px;font-weight:normal;color:#000;transform:scaleX(0.8857);">4</span>
<span class="t" style="left:110.64px;top:1197.99px;font-size:25.291px;line-height:25.291px;font-weight:normal;color:#000;transform:scaleX(0.9624);">SW-1359</span>
<span class="t" style="left:590.87px;top:1197.99px;font-size:25.291px;line-height:25.291px;font-weight:normal;color:#000;transform:scaleX(1.1333);">2</span>
<span class="t" style="left:765.50px;top:1198.99px;font-size:25.291px;line-height:25.291px;font-weight:normal;color:#000;transform:scaleX(0.9534);">$ 2.22</span>
<span class="t" style="left:906.52px;top:1198.99px;font-size:25.291px;line-height:25.291px;font-weight:normal;color:#000;transform:scaleX(1.0402);">King Bearing</span>
<span class="t" style="left:1221.75px;top:1198.99px;font-size:25.291px;line-height:25.291px;font-weight:normal;color:#000;transform:scaleX(0.9903);">$ 1.11</span>
<span class="t" style="left:1306.65px;top:1197.99px;font-size:25.291px;line-height:25.291px;font-weight:normal;color:#000;transform:scaleX(1.0487);">Part</span>
<span class="t" style="left:1506.39px;top:1197.99px;font-size:25.291px;line-height:25.291px;font-weight:normal;color:#000;transform:scaleX(0.9307);">MATERIAL</span>
<span class="t" style="left:1754.88px;top:1181.99px;font-size:25.291px;line-height:25.291px;font-weight:normal;color:#000;transform:scaleX(1.0609);">Ball bearing</span>
<span class="t" style="left:1756.10px;top:1214.99px;font-size:25.291px;line-height:25.291px;font-weight:normal;color:#000;transform:scaleX(0.9010);">SKF</span>
<span class="t" style="left:1955.14px;top:1180.99px;font-size:25.291px;line-height:25.291px;font-weight:normal;color:#000;transform:scaleX(0.9300);">DEMO-809200</span>
<span class="t" style="left:1956.07px;top:1214.99px;font-size:25.291px;line-height:25.291px;font-weight:normal;color:#000;transform:scaleX(0.9300);">8092 </span>
<span class="t" style="left:17.37px;top:1397.99px;font-size:25.291px;line-height:25.291px;font-weight:normal;color:#000;transform:scaleX(1.0333);">5</span>
<span class="t" style="left:110.64px;top:1397.99px;font-size:25.291px;line-height:25.291px;font-weight:normal;color:#000;transform:scaleX(0.9624);">SW-1356</span>
<span class="t" style="left:590.87px;top:1397.99px;font-size:25.291px;line-height:25.291px;font-weight:normal;color:#000;transform:scaleX(1.1333);">2</span>
<span class="t" style="left:765.50px;top:1398.99px;font-size:25.291px;line-height:25.291px;font-weight:normal;color:#000;transform:scaleX(0.9534);">$ 4.02</span>
<span class="t" style="left:906.54px;top:1397.99px;font-size:25.291px;line-height:25.291px;font-weight:normal;color:#000;transform:scaleX(1.0323);">In House</span>
<span class="t" style="left:1221.75px;top:1398.99px;font-size:25.291px;line-height:25.291px;font-weight:normal;color:#000;transform:scaleX(0.9635);">$ 2.01</span>
<span class="t" style="left:1306.65px;top:1397.99px;font-size:25.291px;line-height:25.291px;font-weight:normal;color:#000;transform:scaleX(1.0487);">Part</span>
<span class="t" style="left:1506.39px;top:1397.99px;font-size:25.291px;line-height:25.291px;font-weight:normal;color:#000;transform:scaleX(0.9302);">PRODUCT</span>
<span class="t" style="left:1755.00px;top:1398.99px;font-size:25.291px;line-height:25.291px;font-weight:normal;color:#000;transform:scaleX(0.9994);">Brakes</span>
<span class="t" style="left:1955.14px;top:1380.99px;font-size:25.291px;line-height:25.291px;font-weight:normal;color:#000;transform:scaleX(0.9300);">DEMO-803000</span>
<span class="t" style="left:1956.07px;top:1414.99px;font-size:25.291px;line-height:25.291px;font-weight:normal;color:#000;transform:scaleX(0.9300);">8030 </span>
<span class="t" style="left:17.37px;top:1597.99px;font-size:25.291px;line-height:25.291px;font-weight:normal;color:#000;transform:scaleX(1.0333);">6</span>
<span class="t" style="left:110.65px;top:1597.99px;font-size:25.291px;line-height:25.291px;font-weight:normal;color:#000;transform:scaleX(0.9531);">SW-1340</span>
<span class="t" style="left:590.87px;top:1597.99px;font-size:25.291px;line-height:25.291px;font-weight:normal;color:#000;transform:scaleX(1.1333);">2</span>
<span class="t" style="left:757.80px;top:1598.99px;font-size:25.291px;line-height:25.291px;font-weight:normal;color:#000;transform:scaleX(0.9622);">$ 64.90</span>
<span class="t" style="left:1208.35px;top:1598.99px;font-size:25.291px;line-height:25.291px;font-weight:normal;color:#000;transform:scaleX(0.9641);">$ 32.45</span>
<span class="t" style="left:1306.65px;top:1597.99px;font-size:25.291px;line-height:25.291px;font-weight:normal;color:#000;transform:scaleX(1.0487);">Part</span>
<span class="t" style="left:1506.39px;top:1597.99px;font-size:25.291px;line-height:25.291px;font-weight:normal;color:#000;transform:scaleX(0.9302);">PRODUCT</span>
<span class="t" style="left:1754.98px;top:1598.99px;font-size:25.291px;line-height:25.291px;font-weight:normal;color:#000;transform:scaleX(1.0094);">Bike Rim</span>
<span class="t" style="left:1955.14px;top:1580.99px;font-size:25.291px;line-height:25.291px;font-weight:normal;color:#000;transform:scaleX(0.9300);">DEMO-800000</span>
<span class="t" style="left:1956.07px;top:1614.99px;font-size:25.291px;line-height:25.291px;font-weight:normal;color:#000;transform:scaleX(0.9300);">8000 </span>
<div style="position:absolute;left:0px;top:1618px;width:2012px;height:160px;background:#fff;"></div>
<div style="position:absolute;left:2012px;top:390px;width:25px;height:1388px;background:#fff;"></div>
<div style="position:absolute;left:2012px;top:391px;width:24px;height:348px;background:#e0e1e6;"></div>
<div style="position:absolute;left:0px;top:1618px;width:847px;height:23.5px;background:#e1e2e7;"></div>
<div style="position:absolute;left:0px;top:1651.5px;width:2037px;height:2px;background:#e1e2e9;"></div>
<div style="position:absolute;left:0px;top:1732px;width:2012px;height:2px;background:#e1e2e9;"></div>
<div style="position:absolute;left:0px;top:1652px;width:2px;height:81px;background:#e1e2e9;"></div>
<div style="position:absolute;left:99.5px;top:1652px;width:2px;height:81px;background:#e1e2e9;"></div>
<div style="position:absolute;left:298px;top:1652px;width:2px;height:81px;background:#e1e2e9;"></div>
<div style="position:absolute;left:498px;top:1652px;width:2px;height:81px;background:#e1e2e9;"></div>
<div style="position:absolute;left:698px;top:1652px;width:2px;height:81px;background:#e1e2e9;"></div>
<div style="position:absolute;left:898px;top:1652px;width:2px;height:81px;background:#e1e2e9;"></div>
<div style="position:absolute;left:1098px;top:1652px;width:2px;height:81px;background:#e1e2e9;"></div>
<div style="position:absolute;left:1298px;top:1652px;width:2px;height:81px;background:#e1e2e9;"></div>
<div style="position:absolute;left:1498px;top:1652px;width:2px;height:81px;background:#e1e2e9;"></div>
<div style="position:absolute;left:1746px;top:1652px;width:2px;height:81px;background:#e1e2e9;"></div>
<div style="position:absolute;left:1946px;top:1652px;width:2px;height:81px;background:#e1e2e9;"></div>
<div style="position:absolute;left:0px;top:1746px;width:847px;height:24px;background:#e1e2e7;"></div>
<div style="position:absolute;left:0px;top:1774px;width:2037px;height:4px;background:#f4f4f6;"></div>
<span class="t" style="left:111.00px;top:1682.37px;font-size:26.018px;line-height:26.018px;font-weight:bold;color:#000;transform:scaleX(0.9726);">Totals:</span>
<span class="t" style="left:773.30px;top:1682.37px;font-size:26.018px;line-height:26.018px;font-weight:bold;color:#000;transform:scaleX(1.0069);">$ 1061.27</span>
<div style="position:absolute;left:2037px;top:390px;width:1375px;height:1380px;background:#fff;box-shadow:0 3px 14px rgba(0,0,0,0.32);"></div>
<div style="position:absolute;left:2067px;top:424px;width:48px;height:48px;background:#eefb64;"></div>
<svg style="position:absolute;left:2067px;top:424px;" width="48" height="48" viewBox="0 0 48 48"><path d="M10.3 17.8 H13.9 V24.2 L21 17.8 H25.5 L18.2 24.6 L25.8 32.4 H21.2 L13.9 25.5 V32.4 H10.3 Z M29.3 14.5 L32.6 13.1 L32.5 18.3 H37.2 V20.8 H32.5 V27.5 Q32.5 29.6 35 29.6 H37.2 V32.4 H34 Q29.3 32.4 29.3 28.5 V20.8 H27 V18.3 H29.3 Z" fill="#12263a"/></svg>
<svg style="position:absolute;left:3354px;top:438px;" width="21" height="21" viewBox="0 0 21 21"><path d="M1 1 L20 20 M20 1 L1 20" stroke="#000" stroke-width="2.6"/></svg>
<div style="position:absolute;left:2458px;top:572px;width:481px;height:4px;background:#8fbb6b;"></div>
<svg style="position:absolute;left:2080px;top:619px;" width="30" height="30" viewBox="0 0 30 30"><circle cx="15" cy="15" r="15" fill="#5aaee8"/><circle cx="15" cy="9" r="2" fill="#fff"/><path d="M15 13 V22" stroke="#fff" stroke-width="3.4"/></svg>
<div style="position:absolute;left:2077px;top:661.5px;width:1295px;height:92px;border:2px solid #5aaee8;box-sizing:border-box;"></div>
<svg style="position:absolute;left:2077px;top:815px;" width="30" height="30" viewBox="0 0 30 30"><rect width="30" height="30" rx="2" fill="#8fbb6b"/><path d="M3.9 17.2 L10.5 23.8 L26.3 7.6" stroke="#fff" stroke-width="3.7" fill="none"/></svg>
<svg style="position:absolute;left:2413px;top:814px;" width="30" height="30" viewBox="0 0 30 30"><circle cx="15" cy="15" r="15" fill="#5aaee8"/><circle cx="15" cy="9" r="2" fill="#fff"/><path d="M15 13 V22" stroke="#fff" stroke-width="3.4"/></svg>
<div style="position:absolute;left:2077.5px;top:1688.5px;width:269px;height:71px;border:2px solid #d8e9cb;border-radius:10px;box-sizing:border-box;"></div>
<div style="position:absolute;left:3129px;top:1688px;width:243px;height:72px;background:#8fbb6b;border-radius:11px;"></div>
<span class="t" style="left:2185.69px;top:529.65px;font-size:26.163px;line-height:26.163px;font-weight:normal;color:#000;transform:scaleX(1.0288);">Properties</span>
<span class="t" style="left:2607.31px;top:530.26px;font-size:26.745px;line-height:26.745px;font-weight:bold;color:#000;transform:scaleX(0.9385);">OpenBOM Link</span>
<span class="t" style="left:3088.40px;top:530.26px;font-size:26.745px;line-height:26.745px;font-weight:normal;color:#000;transform:scaleX(1.0269);">Authentication</span>
<span class="t" style="left:2123.60px;top:621.63px;font-size:26.309px;line-height:26.309px;font-weight:normal;color:#000;transform:scaleX(0.9706);">About OpenBOM Link</span>
<span class="t" style="left:2089.70px;top:680.89px;font-size:25.873px;line-height:25.873px;font-weight:normal;color:#000;transform:scaleX(1.0069);">When enabled, a link to the BOM item in OpenBOM will be added to the 'Additional Info' field. You can always</span>
<span class="t" style="left:2088.69px;top:714.89px;font-size:25.873px;line-height:25.873px;font-weight:normal;color:#000;transform:scaleX(1.0119);">access and view all files and the item's thumbnail stored in OpenBOM using this link.</span>
<span class="t" style="left:2120.42px;top:822.74px;font-size:25.582px;line-height:25.582px;font-weight:normal;color:#000;transform:scaleX(1.0790);">Send to Additional Info</span>
<span class="t" style="left:2119.50px;top:1711.25px;font-size:26.163px;line-height:26.163px;font-weight:bold;color:#89b866;transform:scaleX(0.8893);">SAVE SETTINGS</span>
<span class="t" style="left:3170.85px;top:1711.35px;font-size:26.163px;line-height:26.163px;font-weight:bold;color:#fff;transform:scaleX(0.8963);">EXPORT BOM</span>
</body></html>
